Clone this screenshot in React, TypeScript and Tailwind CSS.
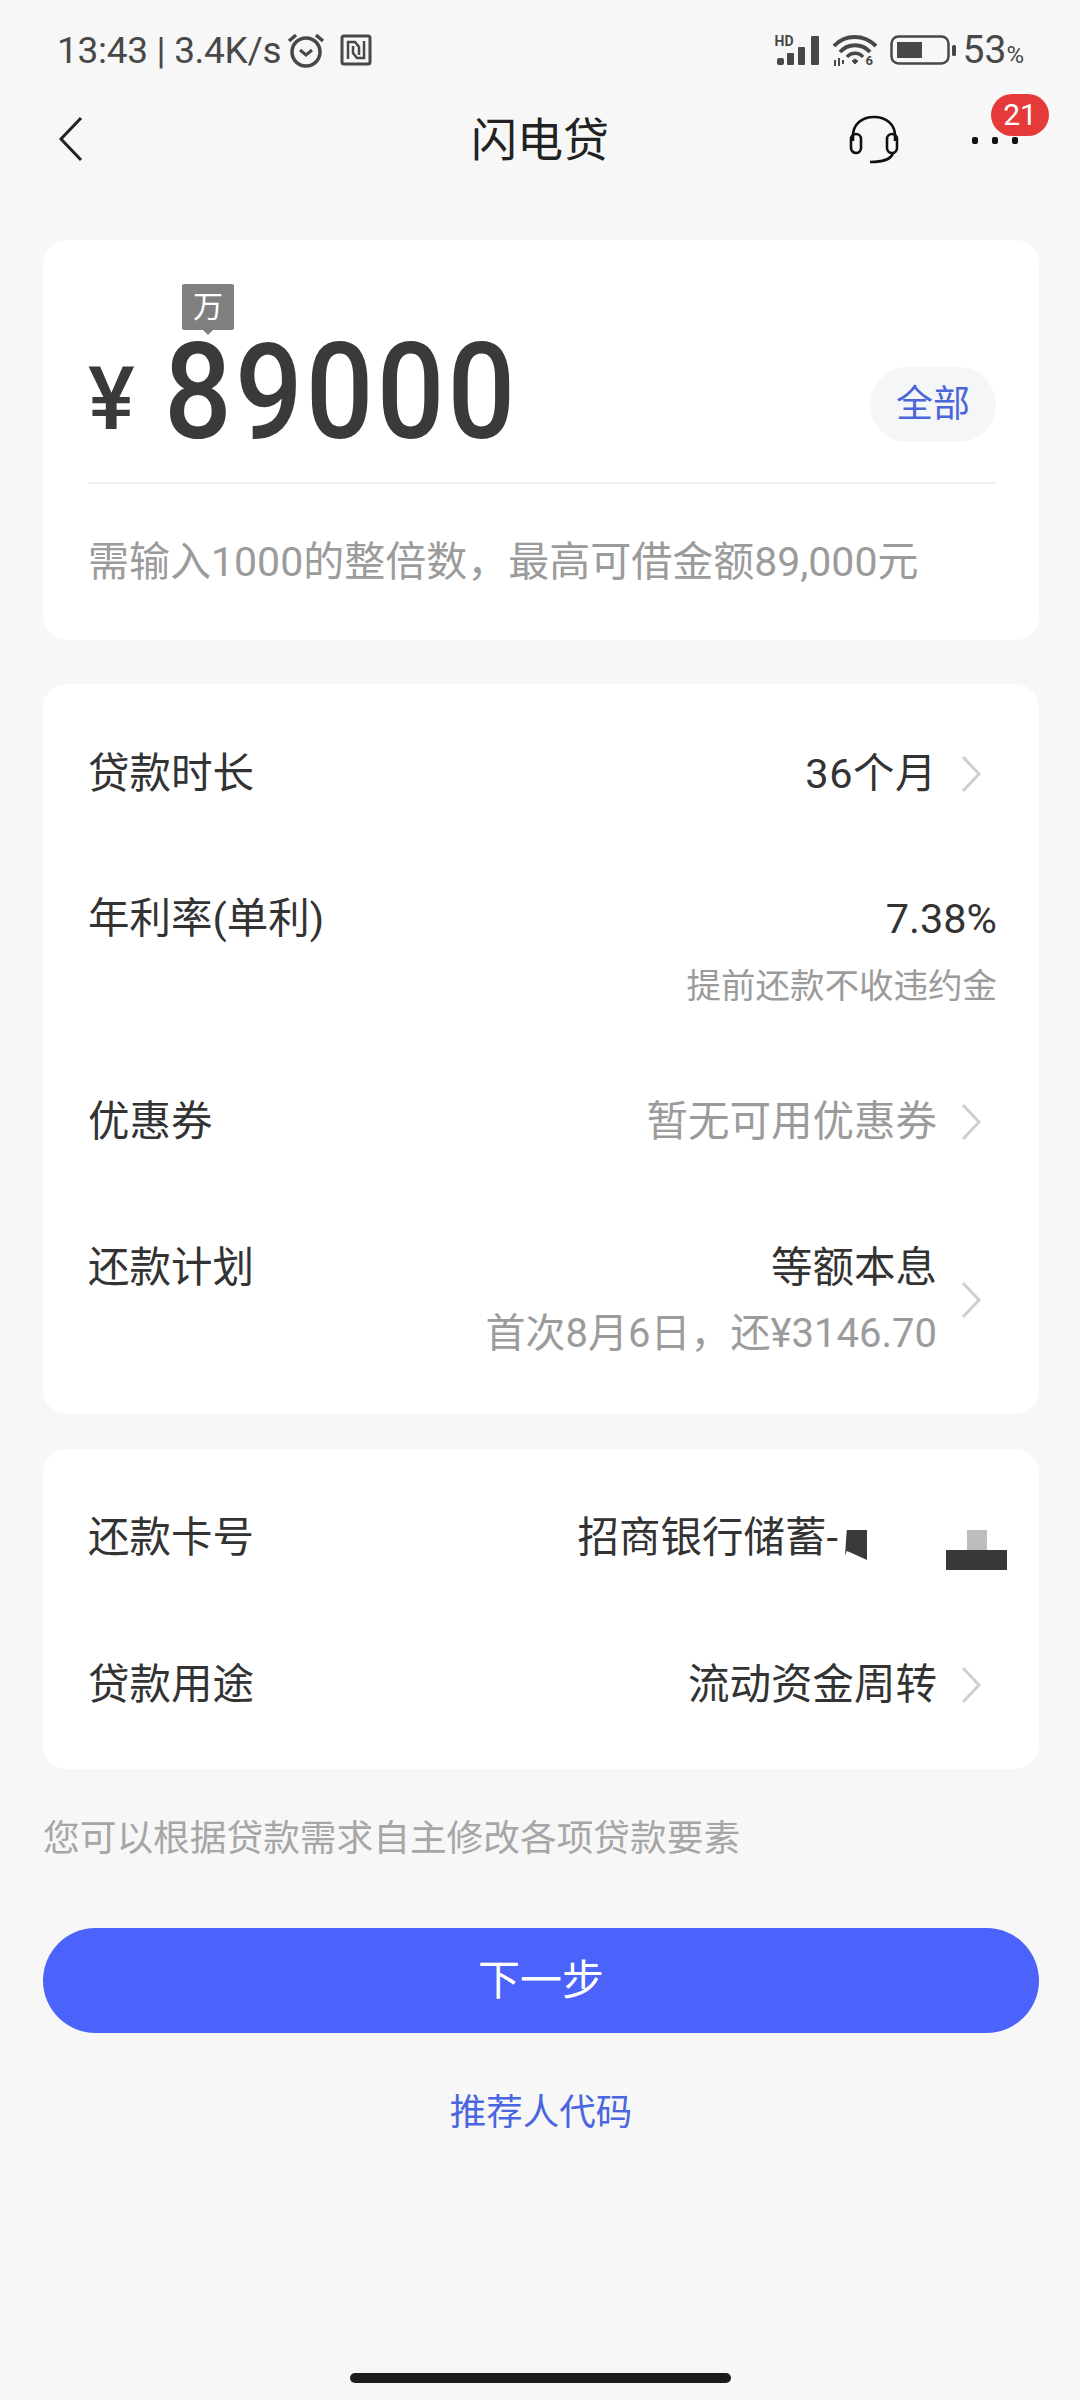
import React from "react";

const Chevron = () => (
  <svg width="22" height="38" viewBox="0 0 22 38" fill="none" className="shrink-0">
    <path d="M3 2 L19 19 L3 36" stroke="#cfcfcf" strokeWidth="3" />
  </svg>
);

const StatusBar = () => (
  <div className="h-[100px] flex items-center justify-between pl-[57px] pr-[56px] text-[#484848]">
    <div className="flex items-center">
      <span className="text-[37px] leading-none tracking-[-0.3px] whitespace-pre">13:43 | 3.4K/s</span>
      <svg width="38" height="36" viewBox="0 0 38 36" fill="none" stroke="#484848" className="ml-[6px]">
        <circle cx="19" cy="20" r="14" strokeWidth="3.5" />
        <path d="M13 18 L19 23 L25 18" strokeWidth="3" />
        <path d="M2 9 L9 3 M36 9 L29 3" strokeWidth="3.5" />
      </svg>
      <svg width="32" height="32" viewBox="0 0 32 32" fill="none" stroke="#484848" className="ml-[15px]">
        <rect x="2" y="2" width="28" height="28" rx="2" strokeWidth="3" />
        <path d="M8 25 V8 H15 L19 13 V21 M24 7 V24 H17 L13 19 V12" strokeWidth="2.5" />
      </svg>
    </div>
    <div className="flex items-center">
      <div className="relative w-[48px] h-[32px]">
        <svg width="48" height="32" viewBox="0 0 48 32" fill="#484848">
          <rect x="2" y="24" width="7" height="7" rx="2" />
          <rect x="12" y="19" width="7" height="12" rx="1" />
          <rect x="23" y="13" width="7" height="18" rx="1" />
          <rect x="36" y="2" width="8" height="29" rx="1" />
        </svg>
        <span className="absolute left-0 top-0 text-[14px] leading-none font-bold">HD</span>
      </div>
      <div className="relative w-[46px] h-[34px] ml-[9px]">
        <svg width="46" height="34" viewBox="0 0 46 34" fill="none" stroke="#484848">
          <path d="M2 13 C13 1 32 1 44 13" strokeWidth="4" />
          <path d="M8 19 C16 10 30 10 38 19" strokeWidth="4" />
          <path d="M15 24 C19 19 27 19 31 24" strokeWidth="3.5" />
          <path d="M20 28 L23 31 L26 28 L23 26 Z" fill="#484848" />
          <path d="M3 27 V33 M7 25 V33 M11 27 V31" strokeWidth="2" />
        </svg>
        <span className="absolute left-[34px] top-[21px] text-[13px] leading-none font-bold">6</span>
      </div>
      <svg width="66" height="30" viewBox="0 0 66 30" fill="none" className="ml-[12px]">
        <rect x="1.5" y="1.5" width="57" height="27" rx="7" stroke="#484848" strokeWidth="2.5" />
        <rect x="7" y="7" width="25" height="16" fill="#484848" />
        <rect x="62" y="10" width="4" height="11" rx="1.5" fill="#484848" />
      </svg>
      <span className="ml-[7px] text-[39px] leading-none">53</span>
      <span className="text-[24px] leading-none self-end mb-[3px]">%</span>
    </div>
  </div>
);

const NavBar = () => (
  <div className="relative h-[80px] flex items-center justify-center">
    <svg width="26" height="46" viewBox="0 0 26 46" fill="none" className="absolute left-[58px] top-[16px]">
      <path d="M23 2 L3 23 L23 44" stroke="#222" strokeWidth="3" />
    </svg>
    <span className="text-[46px] leading-none text-[#222]">闪电贷</span>
    <svg width="50" height="50" viewBox="0 0 50 50" fill="none" stroke="#111" strokeWidth="2.6" className="absolute left-[849px] top-[15px]">
      <path d="M4 26 V21 C4 9 13 2 25 2 C37 2 46 9 46 21 V26" />
      <rect x="2" y="19" width="10" height="19" rx="5" />
      <rect x="38" y="19" width="10" height="19" rx="5" />
      <path d="M44 38 C42 44 36 47 21 47" />
    </svg>
    <div className="absolute left-[972px] top-[37px] flex gap-[14px]">
      <div className="w-[6px] h-[7px] rounded-[2px] bg-[#111]" />
      <div className="w-[6px] h-[7px] rounded-[2px] bg-[#111]" />
      <div className="w-[6px] h-[7px] rounded-[2px] bg-[#111]" />
    </div>
    <div className="absolute left-[991px] top-[-6px] w-[58px] h-[42px] rounded-full bg-[#e53a3a] flex items-center justify-center text-white text-[30px] leading-none">
      21
    </div>
  </div>
);

const AmountCard = () => (
  <div className="relative bg-white rounded-[24px] h-[400px] pl-[45px] pr-[43px] flex flex-col">
    <div className="absolute left-[139px] top-[44px] w-[52px] h-[46px] bg-[#808080] rounded-[2px] flex items-center justify-center text-white text-[30px] leading-none">
      万
      <div className="absolute left-[21px] bottom-[-5px] w-0 h-0 border-x-[5px] border-x-transparent border-t-[5px] border-t-[#808080]" />
    </div>
    <div className="h-[244px] pt-[64px] flex items-center justify-between border-b-2 border-[#f0f0f0]">
      <div className="flex items-center">
        <span className="text-[88px] leading-none font-medium text-[#3a3a3a] mt-[12px]">¥</span>
        <span className="ml-[29px] inline-block origin-left scale-x-[0.89] text-[134px] leading-[96px] font-medium tracking-[3.5px] text-[#3a3a3a]">89000</span>
      </div>
      <div className="w-[126px] h-[75px] mt-[22px] rounded-full bg-[#f5f6f8] flex items-center justify-center text-[37px] leading-none text-[#4a66d8]">
        全部
      </div>
    </div>
    <div className="flex-1 flex items-center text-[41px] leading-none text-[#9b9b9b]">{"需输入1000的整倍数\uFF0C最高可借金额89,000元"}</div>
  </div>
);

const label = "text-[41.5px] leading-[56px] text-[#333]";
const value = "text-[41.5px] leading-[56px] text-[#333]";

const TermsCard = () => (
  <div className="bg-white rounded-[24px] h-[730px] mt-[44px] pl-[45px] pr-[42px] flex flex-col">
    <div className="h-[176px] pt-[4px] flex items-center justify-between">
      <span className={label}>贷款时长</span>
      <div className="flex items-center gap-[23px] pr-[15px]">
        <span className={`${value} tracking-[0.5px]`}>36个月</span>
        <Chevron />
      </div>
    </div>
    <div className="h-[200px] pt-[31px] flex items-start justify-between">
      <span className={label}>年利率(单利)</span>
      <div className="flex flex-col items-end">
        <span className={value}>7.38%</span>
        <span className="text-[34.5px] leading-[48px] mt-[15px] text-[#9b9b9b]">提前还款不收违约金</span>
      </div>
    </div>
    <div className="h-[120px] pt-[4px] flex items-center justify-between">
      <span className={label}>优惠券</span>
      <div className="flex items-center gap-[23px] pr-[15px]">
        <span className="text-[41.5px] leading-[56px] text-[#9b9b9b]">暂无可用优惠券</span>
        <Chevron />
      </div>
    </div>
    <div className="pt-[60px] flex items-start justify-between">
      <span className={label}>还款计划</span>
      <div className="flex items-center gap-[23px] pr-[15px]">
        <div className="flex flex-col items-end">
          <span className={value}>等额本息</span>
          <span className="text-[40px] leading-[52px] mt-[12px] text-[#9b9b9b]">{"首次8月6日\uFF0C还¥3146.70"}</span>
        </div>
        <Chevron />
      </div>
    </div>
  </div>
);

const BankCard = () => (
  <div className="relative bg-white rounded-[24px] h-[320px] mt-[35px] pl-[45px] pr-[42px]">
    <div className="h-[174px] pt-[4px] flex items-center justify-between">
      <span className={label}>还款卡号</span>
      <span className={`${value} mr-[159px]`}>招商银行储蓄-</span>
    </div>
    <div className="h-[120px] pt-[4px] flex items-center justify-between">
      <span className={label}>贷款用途</span>
      <div className="flex items-center gap-[23px] pr-[15px]">
        <span className={value}>流动资金周转</span>
        <Chevron />
      </div>
    </div>
    <div className="absolute left-[802px] top-[81px] w-[22px] h-[30px] bg-[#3a3a3a] [clip-path:polygon(8%_0,100%_0,100%_100%,25%_75%,8%_70%,0_85%)]" />
    <div className="absolute left-[924px] top-[81px] w-[20px] h-[20px] bg-[#bdbdbd]" />
    <div className="absolute left-[903px] top-[101px] w-[61px] h-[20px] bg-[#383838]" />
  </div>
);

export default function App() {
  return (
    <div className="min-h-[2400px] bg-[#f7f7f7] flex flex-col font-['Roboto','Noto_Sans_CJK_SC',sans-serif]">
      <StatusBar />
      <NavBar />
      <main className="pl-[43px] pr-[41px] pt-[60px] flex flex-col">
        <AmountCard />
        <TermsCard />
        <BankCard />
        <div className="h-[136px] pt-[4px] flex items-center text-[36.7px] leading-none text-[#a6a6a6]">您可以根据贷款需求自主修改各项贷款要素</div>
        <button className="mt-[23px] h-[105px] rounded-full bg-[#4b63fb] text-white text-[42px] leading-none">下一步</button>
        <div className="mt-[50px] h-[60px] flex items-center justify-center text-[36.5px] leading-none text-[#4a66e0]">推荐人代码</div>
      </main>
      <div className="mt-auto mb-[17px] mx-auto w-[381px] h-[10px] rounded-full bg-[#1c1c1c]" />
    </div>
  );
}
